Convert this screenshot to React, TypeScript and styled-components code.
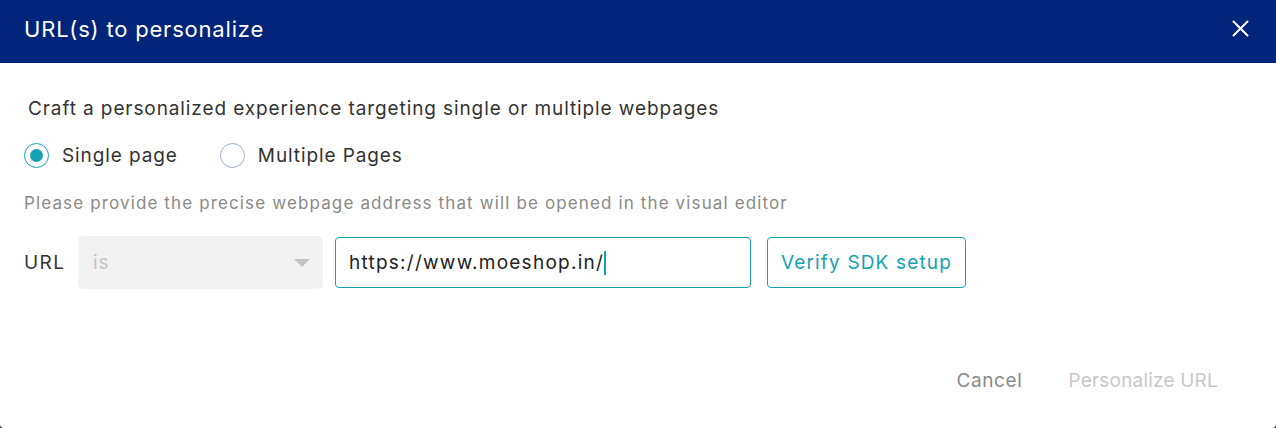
import React from 'react';
import styled, { createGlobalStyle } from 'styled-components';

const GlobalStyle = createGlobalStyle`
  html, body {
    margin: 0;
    padding: 0;
    background: #3a3a3a;
  }
  * {
    box-sizing: border-box;
  }
`;

const Dialog = styled.div`
  width: 1276px;
  height: 428px;
  display: flex;
  flex-direction: column;
  background: #fff;
  border-radius: 0 0 4px 4px;
  overflow: hidden;
  font-family: Inter, 'Noto Sans', sans-serif;
  letter-spacing: 0.9px;
`;

const Header = styled.div`
  height: 63px;
  flex: none;
  display: flex;
  align-items: center;
  justify-content: space-between;
  padding: 0 27px 6px 24px;
  background: #00257b;
  color: #fff;
`;

const Title = styled.h2`
  margin: 0;
  font-size: 22px;
  font-weight: 400;
  letter-spacing: 0.8px;
`;

const CloseButton = styled.button`
  width: 17px;
  height: 17px;
  padding: 0;
  border: none;
  background: none;
  cursor: pointer;
  display: flex;
`;

const Body = styled.div`
  flex: 1;
  display: flex;
  flex-direction: column;
  padding: 34px 24px 0;
`;

const Lead = styled.p`
  margin: 0 0 0 4px;
  font-size: 19px;
  color: #333;
  line-height: 24px;
`;

const RadioGroup = styled.div`
  display: flex;
  align-items: center;
  gap: 42px;
  margin-top: 22px;
`;

const RadioLabel = styled.label`
  display: flex;
  align-items: center;
  gap: 13px;
  font-size: 19px;
  color: #333;
  cursor: pointer;
`;

const RadioCircle = styled.span<{ $checked?: boolean }>`
  width: 25px;
  height: 25px;
  border-radius: 50%;
  border: 1px solid ${p => (p.$checked ? '#16a2b2' : '#9eb0d4')};
  display: flex;
  align-items: center;
  justify-content: center;

  &::after {
    content: '';
    width: 13px;
    height: 13px;
    border-radius: 50%;
    background: ${p => (p.$checked ? '#16a2b2' : 'transparent')};
  }
`;

const Hint = styled.p`
  margin: 23px 0 0;
  font-size: 17px;
  letter-spacing: 1.13px;
  color: #8a8a8a;
  line-height: 24px;
`;

const UrlRow = styled.div`
  display: flex;
  align-items: center;
  gap: 12px;
  margin-top: 21px;
`;

const FieldLabel = styled.span`
  font-size: 19px;
  letter-spacing: 1.4px;
  color: #333;
  width: 42px;
`;

const Select = styled.div`
  width: 245px;
  height: 53px;
  border-radius: 5px;
  background: #f2f2f2;
  display: flex;
  align-items: center;
  justify-content: space-between;
  padding: 0 13px 0 15px;
  font-size: 19px;
  color: #c4c4c4;
`;

const Caret = styled.span`
  width: 0;
  height: 0;
  border-left: 8px solid transparent;
  border-right: 8px solid transparent;
  border-top: 8px solid #c4c4c4;
`;

const TextInput = styled.div`
  width: 416px;
  height: 51px;
  border: 1px solid #16a2b2;
  border-radius: 4px;
  display: flex;
  align-items: center;
  padding: 0 13px;
  font-size: 19px;
  letter-spacing: 1.25px;
  color: #222;
`;

const Cursor = styled.span`
  display: inline-block;
  width: 2px;
  height: 24px;
  background: #16a2b2;
`;

const OutlineButton = styled.button`
  height: 51px;
  padding: 0 13px;
  margin-left: 4px;
  border: 1px solid #16a2b2;
  border-radius: 4px;
  background: #fff;
  color: #16a2b2;
  font-family: inherit;
  letter-spacing: 1.15px;
  font-size: 19px;
  cursor: pointer;
`;

const Footer = styled.div`
  display: flex;
  justify-content: flex-end;
  align-items: center;
  gap: 46px;
  padding: 0 58px 36px 0;
  margin-top: auto;
`;

const TextButton = styled.button<{ $disabled?: boolean }>`
  border: none;
  background: none;
  padding: 0;
  font-family: inherit;
  letter-spacing: ${p => (p.$disabled ? '0.2px' : '0.6px')};
  font-size: 19px;
  color: ${p => (p.$disabled ? '#c8c8c8' : '#8a8a8a')};
  cursor: ${p => (p.$disabled ? 'default' : 'pointer')};
`;

export default function App() {
  return (
    <>
      <GlobalStyle />
      <Dialog>
        <Header>
          <Title>URL(s) to personalize</Title>
          <CloseButton aria-label="Close">
            <svg width="17" height="17" viewBox="0 0 17 17">
              <path d="M1.5 1.5L15.5 15.5M15.5 1.5L1.5 15.5" stroke="#fff" strokeWidth="2" strokeLinecap="round" />
            </svg>
          </CloseButton>
        </Header>
        <Body>
          <Lead>Craft a personalized experience targeting single or multiple webpages</Lead>
          <RadioGroup>
            <RadioLabel>
              <RadioCircle $checked />
              Single page
            </RadioLabel>
            <RadioLabel>
              <RadioCircle />
              Multiple Pages
            </RadioLabel>
          </RadioGroup>
          <Hint>Please provide the precise webpage address that will be opened in the visual editor</Hint>
          <UrlRow>
            <FieldLabel>URL</FieldLabel>
            <Select>
              is
              <Caret />
            </Select>
            <TextInput>
              https://www.moeshop.in/
              <Cursor />
            </TextInput>
            <OutlineButton>Verify SDK setup</OutlineButton>
          </UrlRow>
        </Body>
        <Footer>
          <TextButton>Cancel</TextButton>
          <TextButton $disabled>Personalize URL</TextButton>
        </Footer>
      </Dialog>
    </>
  );
}
